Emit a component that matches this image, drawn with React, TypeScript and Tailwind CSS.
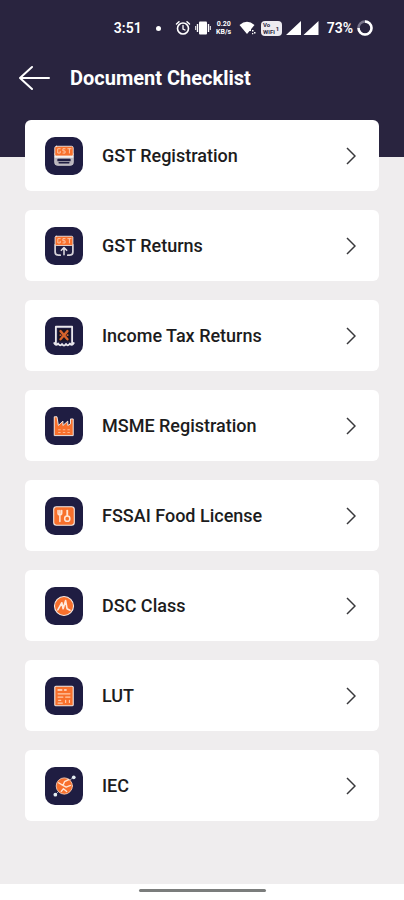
import type { ReactNode } from "react";

const CREAM = "#f3e9e4";
const ORANGE = "#f8702c";

function Glyph({ children }: { children: ReactNode }) {
  return (
    <svg
      viewBox="0 0 24 24"
      className="size-[26px]"
      fill="none"
      strokeLinecap="round"
      strokeLinejoin="round"
      aria-hidden="true"
    >
      {children}
    </svg>
  );
}

function RegistrationIcon() {
  return (
    <Glyph>
      <path d="M3.500 10v7.500q0 3 3 3h11q3 0 3-3V10" fill="#b9b5bd" stroke="#c9c5cb" />
      <rect x="3.500" y="3" width="17" height="9" rx="1.500" fill={ORANGE} stroke={CREAM} strokeWidth="0.800" />
      <path d="M8.500 5.300H6.200v4h2.300V7.600M13 5.300h-2v2h2v2h-2M15.500 5.300h3M17 5.300v4" stroke="#ffc9a8" strokeWidth="0.900" />
      <path d="M4 12.800h16" stroke="#f4f1f1" strokeWidth="1.600" />
      <path d="M6.500 15.300h11v1h-11zM7.500 18.300h9" stroke="#1f1d42" strokeWidth="1.300" />
    </Glyph>
  );
}

function ReturnsIcon() {
  return (
    <Glyph>
      <path d="M3.800 11v6.500q0 3 3 3h1.700M20.200 11v6.500q0 3-3 3h-1.700" stroke="#d5d1d8" strokeWidth="1.600" />
      <rect x="3.800" y="3" width="16.400" height="8.500" rx="1" fill={ORANGE} stroke={CREAM} strokeWidth="0.800" />
      <path d="M8.500 5.200H6.300v4h2.200V7.600M13 5.200h-2v2h2v2h-2M15.500 5.200h3M17 5.200v4" stroke="#ffc9a8" strokeWidth="0.900" />
      <path d="M12 20v-6M9.500 16l2.500-2.500 2.500 2.500" stroke="#e2dfe5" strokeWidth="1.400" />
    </Glyph>
  );
}

function TaxIcon() {
  return (
    <Glyph>
      <path
        d="M4.500 19V3.500h15V19M3 18.500q1.500 3 3.500.500 2 3 3.700.300 1.800 3 3.600 0 1.700 2.700 3.700-.300 2 2.500 3.500-.500"
        stroke="#e9e7ec"
        strokeWidth="1.700"
      />
      <rect x="6.500" y="5.500" width="11" height="11.500" fill="#171323" />
      <path d="M8.800 7.500l6.400 7.500M15.200 7.500L8.800 15" stroke="#d6632c" strokeWidth="2.200" />
      <path d="M8.500 11.200h.5M15 11.200h.5" stroke="#d6632c" strokeWidth="1.500" />
    </Glyph>
  );
}

function FactoryIcon() {
  return (
    <Glyph>
      <path
        d="M3 20.500V3.500h2.500l1.300 8 4.200-4v4l4.500-4v4l2.500-1.500V5.500h2.500v15z"
        fill={ORANGE}
        stroke={CREAM}
        strokeWidth="0.900"
      />
      <path d="M7 15.500h1.500M11.300 15.500h1.500M15.500 15.500H17M7 18h1.500M11.300 18h1.500M15.500 18H17" stroke="#ffb58c" strokeWidth="1" />
    </Glyph>
  );
}

function FoodIcon() {
  return (
    <Glyph>
      <rect x="2.500" y="3.500" width="19" height="17" rx="2.500" fill={ORANGE} stroke={CREAM} />
      <path d="M6.500 7v2.500q0 1.500 1.700 1.500t1.700-1.500V7M8.200 7v10" stroke="#ffe4d4" strokeWidth="1.400" />
      <path d="M15 7v4.500" stroke="#ffe4d4" strokeWidth="1.700" />
      <circle cx="15" cy="14.500" r="2.400" stroke="#ffe4d4" strokeWidth="1.400" />
    </Glyph>
  );
}

function SignatureIcon() {
  return (
    <Glyph>
      <circle cx="12" cy="12" r="8.800" fill={ORANGE} stroke={CREAM} />
      <path d="M6.300 15.500L10 9l1.200 5.500L13.500 7l1.300 7.500 2.700 1.500" stroke="#ffe9dc" strokeWidth="1.500" />
    </Glyph>
  );
}

function LetterIcon() {
  return (
    <Glyph>
      <rect x="3.500" y="3" width="17" height="18" rx="1" fill={ORANGE} stroke={CREAM} />
      <path d="M6.500 6.500h3.500M12.500 6.500h1.500" stroke="#ffe4d4" strokeWidth="1.300" />
      <path d="M6.500 10h11M6.500 13h4.500M13.500 13h4M7 16h2M13.500 16v2M17 16v2M6.500 18.500h4" stroke="#ffc9a8" strokeWidth="1.100" />
    </Glyph>
  );
}

function GlobeIcon() {
  return (
    <Glyph>
      <path d="M4 20l3-3M17 7l3.500-3" stroke="#a9a6ba" strokeWidth="0.900" />
      <circle cx="12.300" cy="12" r="7.500" fill={ORANGE} stroke="#f6cdb8" strokeWidth="0.800" />
      <path d="M7 9l4 2.500 1.500-3.500 4-2M11 11.500l3 1.500 4-1.500M9.500 17l2-2.500 3 2.500" stroke="#ffe4d4" strokeWidth="1.300" />
      <circle cx="21" cy="4" r="1.700" fill="#e4edf2" />
      <circle cx="4" cy="20" r="1.700" fill="#e4edf2" />
    </Glyph>
  );
}

const documents = [
  { name: "GST Registration", icon: <RegistrationIcon /> },
  { name: "GST Returns", icon: <ReturnsIcon /> },
  { name: "Income Tax Returns", icon: <TaxIcon /> },
  { name: "MSME Registration", icon: <FactoryIcon /> },
  { name: "FSSAI Food License", icon: <FoodIcon /> },
  { name: "DSC Class", icon: <SignatureIcon /> },
  { name: "LUT", icon: <LetterIcon /> },
  { name: "IEC", icon: <GlobeIcon /> },
];

function StatusBar() {
  return (
    <div className="flex h-14 items-center justify-end pr-[31px] text-sm font-semibold">
      <span>3:51</span>
      <span className="ml-[14px] size-[5px] rounded-full bg-white" />
      <svg viewBox="0 0 16 16" className="ml-[14px] size-4" fill="none" stroke="currentColor" strokeLinecap="round" aria-hidden="true">
        <circle cx="8" cy="8.500" r="5.500" strokeWidth="1.600" />
        <path d="M8 5.500v3.500l2 1" strokeWidth="1.300" />
        <path d="M1.500 4l2.500-2.300M14.500 4L12 1.700" strokeWidth="1.500" />
      </svg>
      <svg viewBox="0 0 16 16" className="ml-1 size-4" fill="none" stroke="currentColor" aria-hidden="true">
        <rect x="4" y="1.500" width="8" height="13" rx="1" fill="currentColor" stroke="none" />
        <path d="M2.500 4v8M13.500 4v8" strokeWidth="1.400" />
        <path d="M.7 6v4M15.300 6v4" strokeWidth="1" />
      </svg>
      <span className="ml-1 flex w-[18px] flex-col items-center text-[7px] leading-[8px] font-bold">
        <span>0.20</span>
        <span>KB/s</span>
      </span>
      <svg viewBox="0 0 18 16" className="ml-[6px] h-4 w-[18px]" fill="currentColor" aria-hidden="true">
        <path d="M8 14L.5 5Q8-1.500 15.500 5L12 9.200V11H10.500z" />
        <path d="M13 10h1.500v1.500H13zM15 12h1.500v1.500H15zM13 13h1.300v1.300H13z" />
      </svg>
      <span className="ml-1 flex h-[15px] w-[21px] items-center justify-center gap-px rounded-sm bg-[#eceaf0] text-[6px] leading-[7px] font-bold text-[#29243f]">
        <span className="flex flex-col">
          <span>Vo</span>
          <span>WiFi</span>
        </span>
        <span>1</span>
      </span>
      <svg viewBox="0 0 34 16" className="ml-1 h-4 w-[34px]" fill="currentColor" aria-hidden="true">
        <path d="M0 15L15 1V15zM17.500 15L32.500 1V15z" />
      </svg>
      <span className="ml-[7px]">73%</span>
      <svg viewBox="0 0 16 16" className="ml-1 size-4" fill="none" aria-hidden="true">
        <circle cx="8" cy="8" r="6.500" stroke="#77738a" strokeWidth="2.500" />
        <path d="M8 1.500A6.500 6.500 0 1 1 1.500 8" stroke="white" strokeWidth="2.500" />
      </svg>
    </div>
  );
}

export default function App() {
  return (
    <div className="flex min-h-screen flex-col bg-[#efedee] font-['Roboto',sans-serif]">
      <header className="bg-[#29243f] pb-[57px] text-white">
        <StatusBar />
        <div className="flex h-11 items-center gap-5 pl-[19px]">
          <button type="button" aria-label="Back" className="flex">
            <svg viewBox="0 0 31 26" className="h-[26px] w-[31px]" fill="none" stroke="currentColor" strokeWidth="2" strokeLinecap="round" strokeLinejoin="round" aria-hidden="true">
              <path d="M30 13H1M13 2L1 13l12 11" />
            </svg>
          </button>
          <h1 className="text-xl font-bold">Document Checklist</h1>
        </div>
      </header>

      <main className="-mt-[37px] flex-1 px-[25px]">
        <ul className="flex flex-col gap-[19px]">
          {documents.map((doc) => (
            <li key={doc.name}>
              <button type="button" className="flex h-[71px] w-full items-center rounded-md bg-white px-5 text-left">
                <span className="flex size-[38px] items-center justify-center rounded-[10px] bg-[#1f1d42]">
                  {doc.icon}
                </span>
                <span className="ml-[19px] flex-1 text-lg font-medium text-[#1c1c20]">{doc.name}</span>
                <svg viewBox="0 0 10 18" className="mr-[3px] h-[18px] w-[10px]" fill="none" stroke="#38383b" strokeWidth="1.500" aria-hidden="true">
                  <path d="M1 1l8 8-8 8" />
                </svg>
              </button>
            </li>
          ))}
        </ul>
      </main>

      <footer className="flex h-4 justify-center bg-white pt-[5px]">
        <div className="h-[3px] w-[127px] rounded-full bg-[#7b7d7c]" />
      </footer>
    </div>
  );
}
